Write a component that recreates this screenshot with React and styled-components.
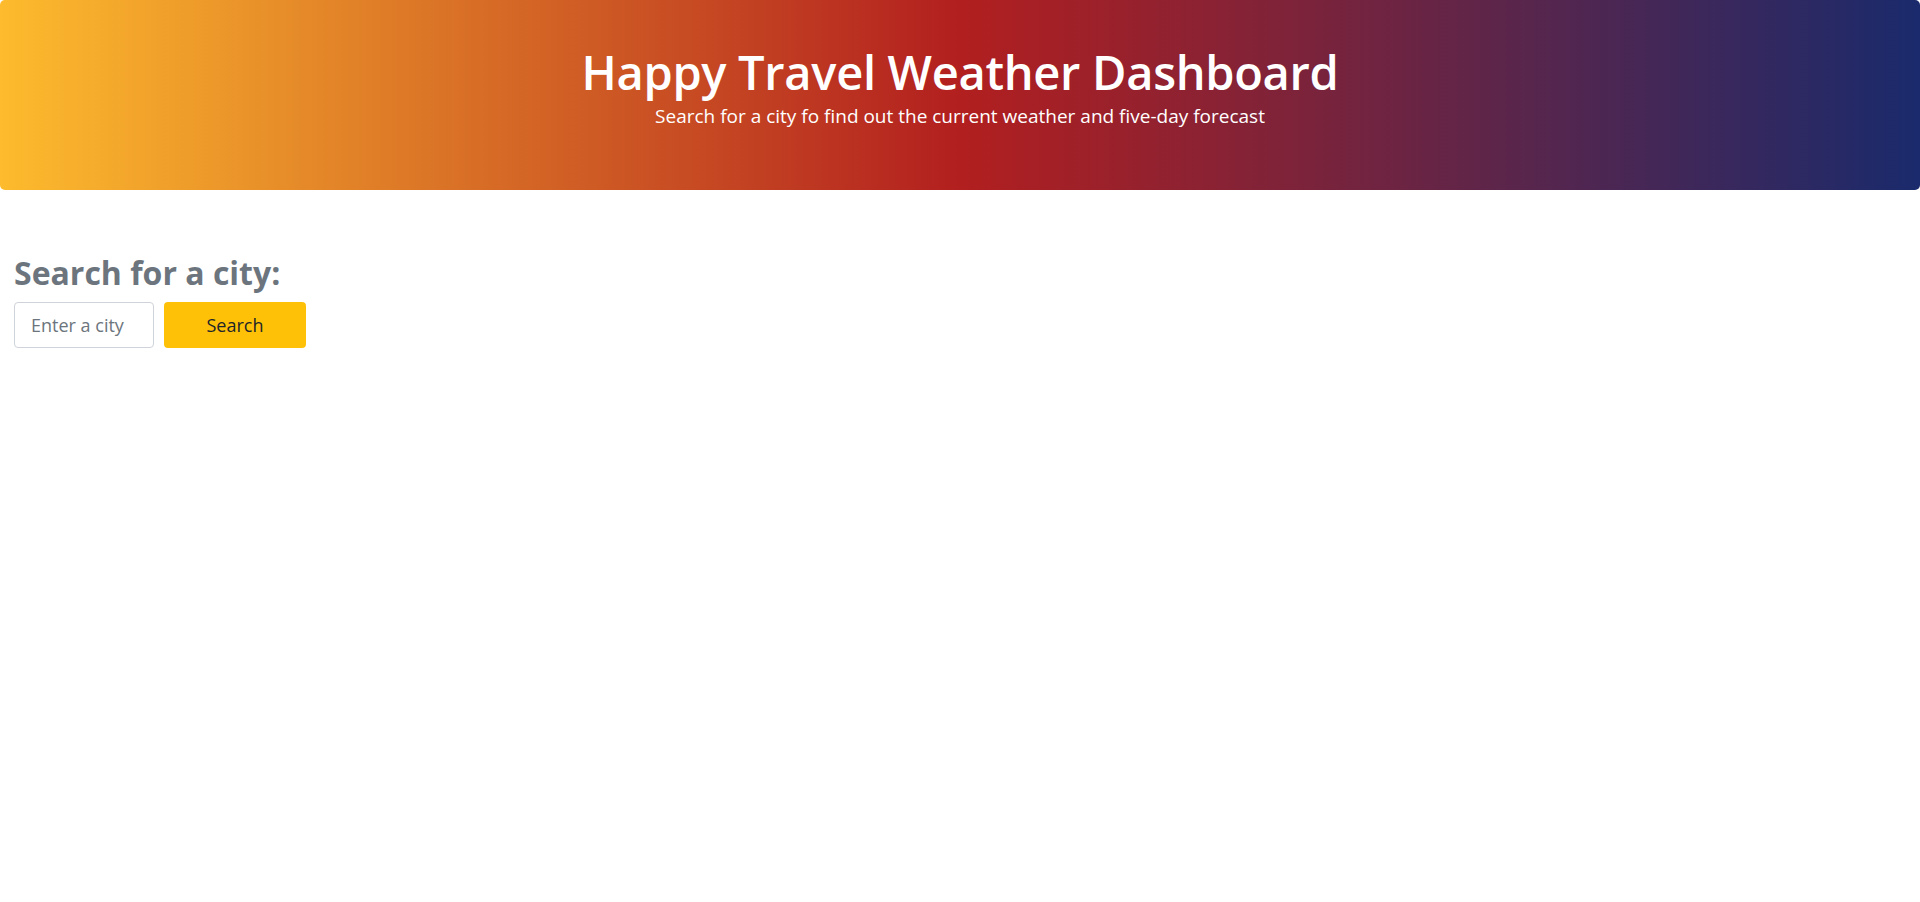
import React from 'react';
import styled, { createGlobalStyle } from 'styled-components';

const GlobalStyle = createGlobalStyle`
	body {
		margin: 0;
		background: #fff;
		font-family: "Open Sans", "Noto Sans", sans-serif;
		color: #212529;
	}
`;

const Jumbotron = styled.header`
	height: 190px;
	box-sizing: border-box;
	padding-top: 44px;
	border-radius: 5px;
	background: linear-gradient(to right, #fdbb2d, #b21f1f, #1a2a6c);
	color: #fff;
	text-align: center;
`;

const Title = styled.h1`
	margin: 0;
	font-size: 47px;
	font-weight: 600;
	line-height: 56px;
	letter-spacing: -0.3px;
`;

const Lead = styled.p`
	margin: 5px 0 0;
	font-size: 19px;
	font-weight: 400;
	line-height: 22px;
`;

const Main = styled.main`
	padding: 63px 14px 0;
`;

const Heading = styled.h2`
	margin: 0 0 9px;
	font-size: 32px;
	font-weight: 700;
	line-height: 40px;
	color: #6c757d;
`;

const SearchForm = styled.form`
	display: flex;
	gap: 10px;
`;

const CityInput = styled.input`
	width: 140px;
	height: 46px;
	box-sizing: border-box;
	padding: 0 16px;
	border: 1px solid #ced4da;
	border-radius: 4px;
	font-family: inherit;
	font-size: 18px;
	color: #495057;
	outline: none;

	&::placeholder {
		color: #6c757d;
	}
`;

const SearchButton = styled.button`
	width: 142px;
	height: 46px;
	border: none;
	border-radius: 4px;
	background: #ffc107;
	font-family: inherit;
	font-size: 18px;
	color: #212529;
	cursor: pointer;
`;

const App = () => {
	return (
		<>
			<GlobalStyle />
			<Jumbotron>
				<Title>Happy Travel Weather Dashboard</Title>
				<Lead>Search for a city fo find out the current weather and five-day forecast</Lead>
			</Jumbotron>

			<Main>
				<Heading>Search for a city:</Heading>
				<SearchForm onSubmit={(e) => e.preventDefault()}>
					<CityInput type="text" placeholder="Enter a city" />
					<SearchButton type="submit">Search</SearchButton>
				</SearchForm>
			</Main>
		</>
	);
};

export default App;
